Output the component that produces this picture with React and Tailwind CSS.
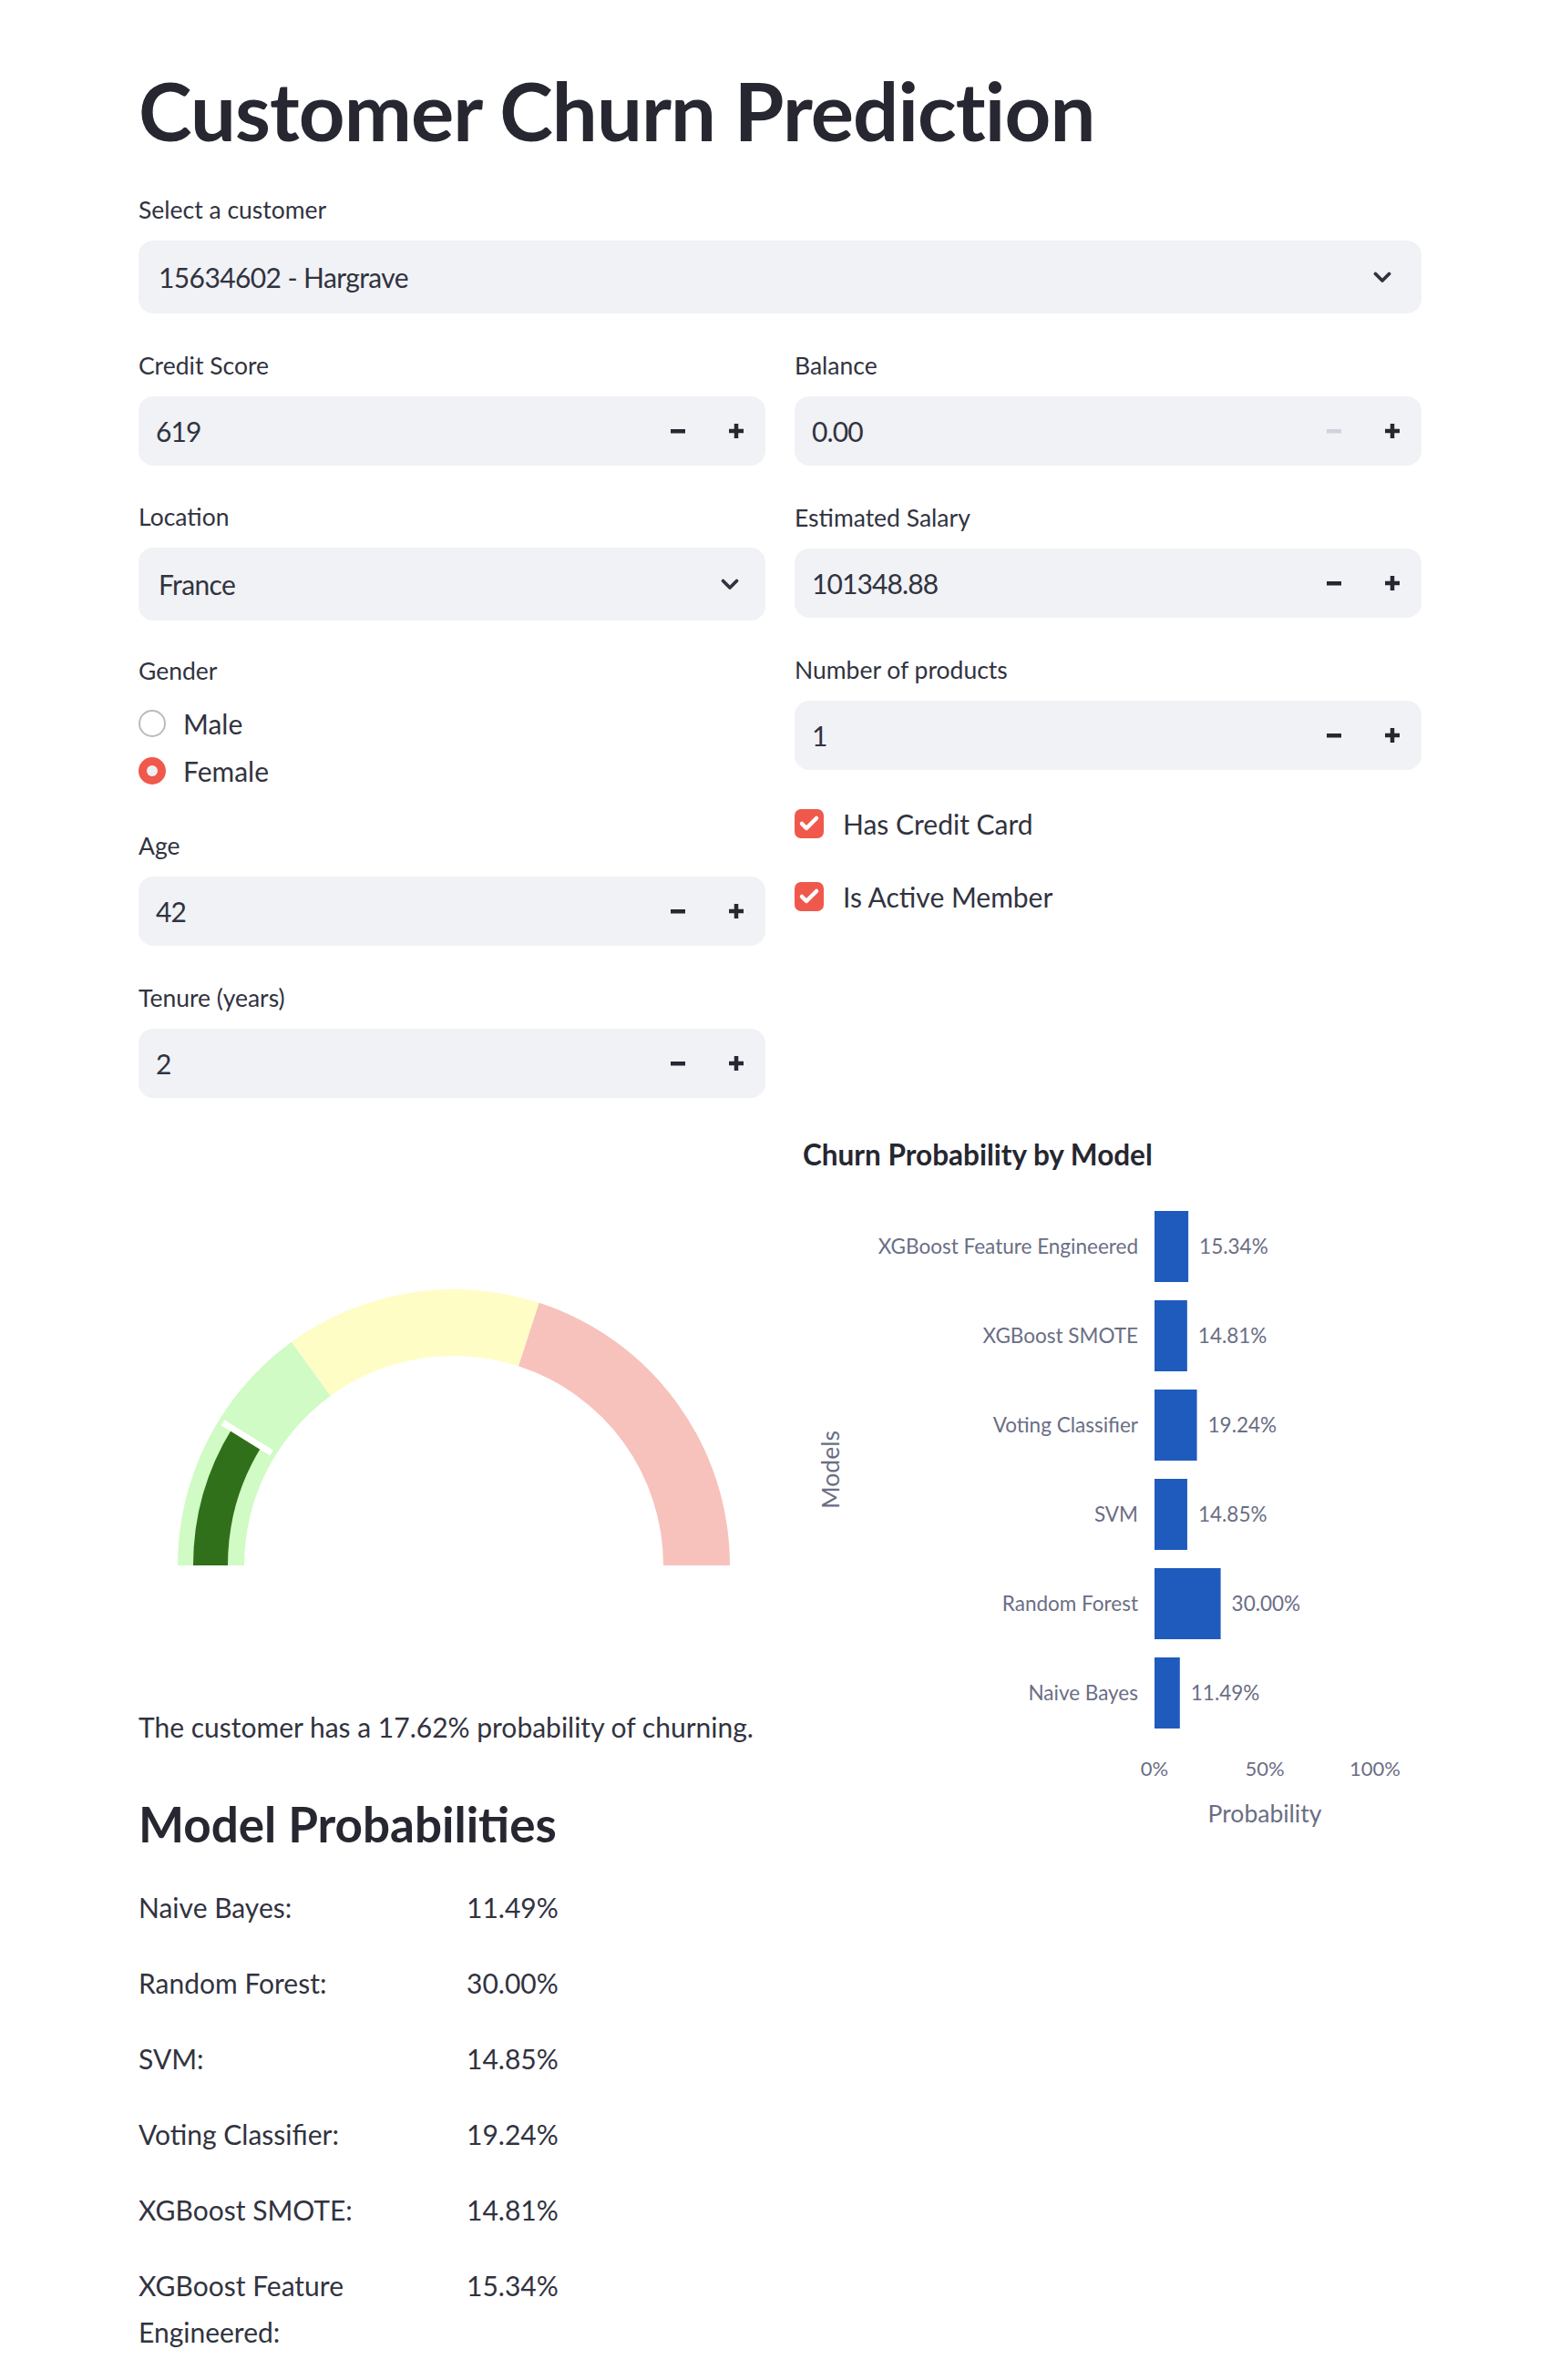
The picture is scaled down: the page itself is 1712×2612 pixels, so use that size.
import { Check } from 'lucide-react';

const models = [
  { name: 'XGBoost Feature Engineered', value: 15.34 },
  { name: 'XGBoost SMOTE', value: 14.81 },
  { name: 'Voting Classifier', value: 19.24 },
  { name: 'SVM', value: 14.85 },
  { name: 'Random Forest', value: 30.0 },
  { name: 'Naive Bayes', value: 11.49 },
];

const listRows = [
  ['Naive Bayes:', '11.49%'],
  ['Random Forest:', '30.00%'],
  ['SVM:', '14.85%'],
  ['Voting Classifier:', '19.24%'],
  ['XGBoost SMOTE:', '14.81%'],
  ['XGBoost Feature Engineered:', '15.34%'],
];

function Label({ children }) {
  return <div className="h-[36px] text-[26.5px] leading-[36px]">{children}</div>;
}

function MinusIcon({ disabled }) {
  return (
    <svg width="16" height="16" viewBox="0 0 16 16">
      <rect x="0" y="6" width="16" height="4.5" fill={disabled ? '#d0d3dc' : '#262730'} />
    </svg>
  );
}

function PlusIcon() {
  return (
    <svg width="16" height="16" viewBox="0 0 16 16">
      <rect x="0" y="5.75" width="16" height="4.5" fill="#262730" />
      <rect x="5.75" y="0" width="4.5" height="16" fill="#262730" />
    </svg>
  );
}

function Chevron() {
  return (
    <svg width="22" height="14" viewBox="0 0 22 14">
      <path d="M3.5 3.5 L11 11 L18.5 3.5" fill="none" stroke="#31333f" strokeWidth="3.8" strokeLinecap="round" strokeLinejoin="round" />
    </svg>
  );
}

function NumberInput({ label, value, minusDisabled }) {
  return (
    <div>
      <Label>{label}</Label>
      <div className="mt-[16px] flex h-[76px] items-center rounded-[16px] bg-[#f0f2f6]">
        <span className="flex-1 pl-[19px] text-[30px] tracking-[-0.03em]">{value}</span>
        <div className="flex w-[64px] justify-center">
          <MinusIcon disabled={minusDisabled} />
        </div>
        <div className="flex w-[64px] justify-center">
          <PlusIcon />
        </div>
      </div>
    </div>
  );
}

function SelectBox({ label, value, chevronPad }) {
  return (
    <div>
      <Label>{label}</Label>
      <div className="mt-[16px] flex h-[80px] items-center rounded-[16px] bg-[#f0f2f6] pl-[22px]">
        <span className="flex-1 text-[30px] tracking-[-0.02em]">{value}</span>
        <div className={chevronPad}>
          <Chevron />
        </div>
      </div>
    </div>
  );
}

function Radio({ label, checked }) {
  return (
    <div className="flex h-[40px] items-center">
      {checked ? (
        <div className="flex h-[30px] w-[30px] items-center justify-center rounded-full bg-[#f0584c]">
          <div className="h-[12px] w-[12px] rounded-full bg-[#eef0f4]" />
        </div>
      ) : (
        <div className="h-[30px] w-[30px] rounded-full border-2 border-[#b9bbc2] bg-white" />
      )}
      <span className="ml-[19px] text-[30px]">{label}</span>
    </div>
  );
}

function CheckBox({ label }) {
  return (
    <div className="flex h-[40px] items-center">
      <div className="flex h-[32px] w-[32px] items-center justify-center rounded-[7px] bg-[#f0584c]">
        <Check size={24} strokeWidth={4.5} color="#ffffff" />
      </div>
      <span className="ml-[21px] text-[30px]">{label}</span>
    </div>
  );
}

function arc(cx, cy, r0, r1, f0, f1) {
  const a0 = Math.PI * (1 - f0);
  const a1 = Math.PI * (1 - f1);
  const p = (r, a) => `${(cx + r * Math.cos(a)).toFixed(2)} ${(cy - r * Math.sin(a)).toFixed(2)}`;
  return `M ${p(r1, a0)} A ${r1} ${r1} 0 0 1 ${p(r1, a1)} L ${p(r0, a1)} A ${r0} ${r0} 0 0 0 ${p(r0, a0)} Z`;
}

function Gauge({ value }) {
  const cx = 346;
  const cy = 483;
  const f = value / 100;
  const a = Math.PI * (1 - f);
  return (
    <svg width="688" height="600" viewBox="0 0 688 600">
      <path d={arc(cx, cy, 230, 303, 0, 0.3)} fill="#d0fbc4" />
      <path d={arc(cx, cy, 230, 303, 0.3, 0.6)} fill="#fefdc6" />
      <path d={arc(cx, cy, 230, 303, 0.6, 1)} fill="#f7c2bc" />
      <path d={arc(cx, cy, 248, 286, 0, f)} fill="#31701a" />
      <line
        x1={cx + 235 * Math.cos(a)}
        y1={cy - 235 * Math.sin(a)}
        x2={cx + 298 * Math.cos(a)}
        y2={cy - 298 * Math.sin(a)}
        stroke="#ffffff"
        strokeWidth="7"
      />
    </svg>
  );
}

function BarChart() {
  const x0 = 395;
  const scale = 242;
  return (
    <svg width="688" height="800" viewBox="0 0 688 800">
      <text x="9" y="44" fontSize="31.5" fontWeight="700" fill="#262730">
        Churn Probability by Model
      </text>
      {models.map((m, i) => {
        const cy = 133 + i * 98;
        const w = (m.value / 100) * scale;
        return (
          <g key={m.name}>
            <text x="377" y={cy + 8} fontSize="22.5" textAnchor="end" fill="#6a6e85">
              {m.name}
            </text>
            <rect x={x0} y={cy - 39} width={w} height="78" fill="#1f5bbd" />
            <text x={x0 + w + 12} y={cy + 8} fontSize="22.5" fill="#6a6e85">
              {m.value.toFixed(2)}%
            </text>
          </g>
        );
      })}
      <text x="42" y="378" fontSize="26.5" fill="#6a6e85" textAnchor="middle" transform="rotate(-90 42 378)" dominantBaseline="middle">
        Models
      </text>
      {[0, 50, 100].map((t) => (
        <text key={t} x={x0 + (t / 100) * scale} y="714" fontSize="22" textAnchor="middle" fill="#6a6e85">
          {t}%
        </text>
      ))}
      <text x="516" y="765" fontSize="26.5" textAnchor="middle" fill="#6a6e85">
        Probability
      </text>
    </svg>
  );
}

export default function App() {
  return (
    <div className="min-h-[2612px] bg-white text-[#31333f] [font-family:Lato,'Liberation_Sans',sans-serif]">
      <div className="ml-[152px] w-[1408px] pt-[69px]">
        <h1 className="text-[88.5px] font-bold leading-[104px] tracking-[-0.01em] text-[#262730]">Customer Churn Prediction</h1>

        <div className="mt-[39px]">
          <SelectBox label="Select a customer" value="15634602 - Hargrave" chevronPad="pr-[32px]" />
        </div>

        <div className="mt-[39px] grid grid-cols-2 items-start gap-x-[32px]">
          <div className="flex flex-col">
            <NumberInput label="Credit Score" value="619" />
            <div className="mt-[38px]">
              <SelectBox label="Location" value="France" chevronPad="pr-[28px]" />
            </div>
            <div className="mt-[37px]">
              <Label>Gender</Label>
              <div className="mt-[20px] flex flex-col gap-[12px]">
                <Radio label="Male" />
                <Radio label="Female" checked />
              </div>
            </div>
            <div className="mt-[44px]">
              <NumberInput label="Age" value="42" />
            </div>
            <div className="mt-[39px]">
              <NumberInput label="Tenure (years)" value="2" />
            </div>
          </div>

          <div className="flex flex-col">
            <NumberInput label="Balance" value="0.00" minusDisabled />
            <div className="mt-[39px]">
              <NumberInput label="Estimated Salary" value="101348.88" />
            </div>
            <div className="mt-[39px]">
              <NumberInput label="Number of products" value="1" />
            </div>
            <div className="mt-[39px] flex flex-col gap-[40px]">
              <CheckBox label="Has Credit Card" />
              <CheckBox label="Is Active Member" />
            </div>
          </div>
        </div>

        <div className="mt-[30px] grid grid-cols-2 items-start gap-x-[32px]">
          <div className="flex flex-col">
            <Gauge value={17.62} />
            <p className="mt-[35px] text-[30px] leading-[51px]">The customer has a 17.62% probability of churning.</p>
            <h3 className="mt-[50px] text-[53px] font-bold leading-[62px] text-[#262730]">Model Probabilities</h3>
            <div className="mt-[35px] flex flex-col gap-[32px]">
              {listRows.map(([name, val]) => (
                <div key={name} className="grid grid-cols-2 gap-x-[32px]">
                  <div className="text-[30px] leading-[51px]">{name}</div>
                  <div className="text-[30px] leading-[51px]">{val}</div>
                </div>
              ))}
            </div>
          </div>
          <div>
            <BarChart />
          </div>
        </div>
      </div>
    </div>
  );
}
